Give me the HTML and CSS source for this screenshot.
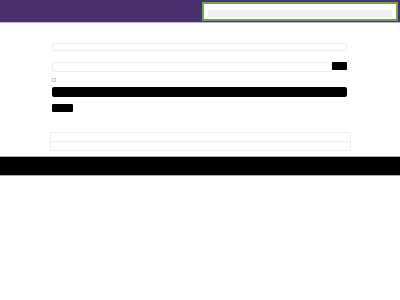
FILE: index.html
```html
<!DOCTYPE html>
<html lang="en">
<head>
<meta charset="utf-8">
<title>Page</title>
<link rel="stylesheet" href="styles.css">
</head>
<body>
<header class="topbar">
  <div class="search"><div class="search-field"></div></div>
</header>
<main class="content">
  <div class="field"></div>
  <div class="field-row">
    <div class="field field-grow"></div>
    <div class="btn btn-go"></div>
  </div>
  <div class="check"></div>
  <div class="bar"></div>
  <div class="btn btn-small"></div>
</main>
<table class="grid">
  <tr><td></td></tr>
  <tr><td></td></tr>
</table>
<div class="band"></div>
</body>
</html>
```

FILE: styles.css
```css
html, body {
  margin: 0;
  padding: 0;
  background: #ffffff;
  font-family: "Liberation Sans", Arial, sans-serif;
}
.topbar {
  height: 23px;
  box-sizing: border-box;
  background: #4b2f6e;
  border-bottom: 1px solid #c4b3dc;
  display: flex;
  justify-content: flex-end;
  align-items: flex-start;
  padding: 2px 2px 0 0;
}
.search {
  width: 196px;
  height: 19px;
  box-sizing: border-box;
  border: 2px solid #6aa84f;
  background: #ffffff;
  padding: 6px 4px 0 4px;
}
.search-field {
  height: 7px;
  background: #f0f0f0;
}
.content {
  width: 295px;
  margin: 20px 0 0 52px;
  display: flex;
  flex-direction: column;
}
.field {
  height: 8px;
  border: 1px solid #ececec;
  border-radius: 2px;
  box-sizing: border-box;
}
.field-row {
  display: flex;
  align-items: flex-start;
  margin-top: 11px;
}
.field-grow {
  flex: 1;
  height: 10px;
}
.btn {
  background: #000000;
  border-radius: 1px;
}
.btn-go {
  width: 15px;
  height: 8px;
}
.check {
  width: 2px;
  height: 2px;
  border: 1px solid #c8c8c8;
  margin-top: 6px;
}
.bar {
  height: 10px;
  background: #000000;
  border-radius: 2px;
  margin-top: 5px;
}
.btn-small {
  width: 21px;
  height: 8px;
  margin-top: 7px;
}
.grid {
  margin: 20px 0 0 50px;
  width: 301px;
  border-collapse: collapse;
}
.grid td {
  height: 8px;
  padding: 0;
  border: 1px solid #eeeeee;
}
.band {
  margin-top: 5px;
  height: 18px;
  background: #000000;
  border-top: 1px solid #a8a8a8;
  border-bottom: 1px solid #a8a8a8;
}
```
